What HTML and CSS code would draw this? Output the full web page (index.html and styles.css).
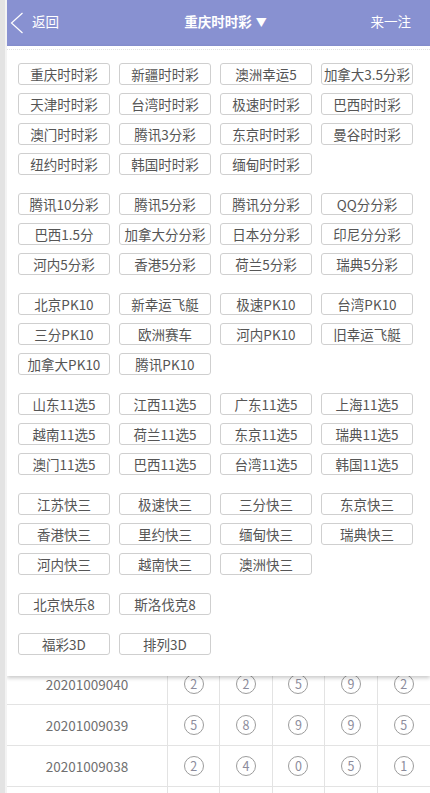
FILE: index.html
```html
<!DOCTYPE html>
<html lang="zh-CN">
<head>
<meta charset="utf-8">
<title>重庆时时彩</title>
<link rel="stylesheet" href="styles.css">
</head>
<body>
<div class="app">
  <header class="topbar">
    <a class="back">
      <svg class="chev" width="14" height="22" viewBox="0 0 14 22"><polyline points="12.5,1 1.5,11 12.5,21" fill="none" stroke="#fff" stroke-width="1.2"/></svg>
      <span>返回</span>
    </a>
    <div class="title">重庆时时彩 <span class="tri">▼</span></div>
    <div class="right">来一注</div>
  </header>

  <div class="list">
    <div class="row">
      <div class="issue">20201009040</div>
      <div class="cell"><span class="ball">2</span></div>
      <div class="cell"><span class="ball">2</span></div>
      <div class="cell"><span class="ball">5</span></div>
      <div class="cell"><span class="ball">9</span></div>
      <div class="cell"><span class="ball">2</span></div>
    </div>
    <div class="row">
      <div class="issue">20201009039</div>
      <div class="cell"><span class="ball">5</span></div>
      <div class="cell"><span class="ball">8</span></div>
      <div class="cell"><span class="ball">9</span></div>
      <div class="cell"><span class="ball">9</span></div>
      <div class="cell"><span class="ball">5</span></div>
    </div>
    <div class="row">
      <div class="issue">20201009038</div>
      <div class="cell"><span class="ball">2</span></div>
      <div class="cell"><span class="ball">4</span></div>
      <div class="cell"><span class="ball">0</span></div>
      <div class="cell"><span class="ball">5</span></div>
      <div class="cell"><span class="ball">1</span></div>
    </div>
    <div class="row">
      <div class="issue"></div>
      <div class="cell"></div>
      <div class="cell"></div>
      <div class="cell"></div>
      <div class="cell"></div>
      <div class="cell"></div>
    </div>
  </div>

  <div class="panel">
    <div class="dots"></div>
    <div class="groups">
      <div class="grp">
        <div class="btn">重庆时时彩</div><div class="btn">新疆时时彩</div><div class="btn">澳洲幸运5</div><div class="btn">加拿大3.5分彩</div>
        <div class="btn">天津时时彩</div><div class="btn">台湾时时彩</div><div class="btn">极速时时彩</div><div class="btn">巴西时时彩</div>
        <div class="btn">澳门时时彩</div><div class="btn">腾讯3分彩</div><div class="btn">东京时时彩</div><div class="btn">曼谷时时彩</div>
        <div class="btn">纽约时时彩</div><div class="btn">韩国时时彩</div><div class="btn">缅甸时时彩</div>
      </div>
      <div class="grp">
        <div class="btn">腾讯10分彩</div><div class="btn">腾讯5分彩</div><div class="btn">腾讯分分彩</div><div class="btn">QQ分分彩</div>
        <div class="btn">巴西1.5分</div><div class="btn">加拿大分分彩</div><div class="btn">日本分分彩</div><div class="btn">印尼分分彩</div>
        <div class="btn">河内5分彩</div><div class="btn">香港5分彩</div><div class="btn">荷兰5分彩</div><div class="btn">瑞典5分彩</div>
      </div>
      <div class="grp">
        <div class="btn">北京PK10</div><div class="btn">新幸运飞艇</div><div class="btn">极速PK10</div><div class="btn">台湾PK10</div>
        <div class="btn">三分PK10</div><div class="btn">欧洲赛车</div><div class="btn">河内PK10</div><div class="btn">旧幸运飞艇</div>
        <div class="btn">加拿大PK10</div><div class="btn">腾讯PK10</div>
      </div>
      <div class="grp">
        <div class="btn">山东11选5</div><div class="btn">江西11选5</div><div class="btn">广东11选5</div><div class="btn">上海11选5</div>
        <div class="btn">越南11选5</div><div class="btn">荷兰11选5</div><div class="btn">东京11选5</div><div class="btn">瑞典11选5</div>
        <div class="btn">澳门11选5</div><div class="btn">巴西11选5</div><div class="btn">台湾11选5</div><div class="btn">韩国11选5</div>
      </div>
      <div class="grp">
        <div class="btn">江苏快三</div><div class="btn">极速快三</div><div class="btn">三分快三</div><div class="btn">东京快三</div>
        <div class="btn">香港快三</div><div class="btn">里约快三</div><div class="btn">缅甸快三</div><div class="btn">瑞典快三</div>
        <div class="btn">河内快三</div><div class="btn">越南快三</div><div class="btn">澳洲快三</div>
      </div>
      <div class="grp">
        <div class="btn">北京快乐8</div><div class="btn">斯洛伐克8</div>
      </div>
      <div class="grp">
        <div class="btn">福彩3D</div><div class="btn">排列3D</div>
      </div>
    </div>
  </div>
</div>
</body>
</html>
```

FILE: styles.css
```css
html, body {
  margin: 0;
  padding: 0;
}
body {
  width: 430px;
  height: 793px;
  overflow: hidden;
  padding-left: 7px;
  box-sizing: border-box;
  background: linear-gradient(to right, #e3e3e3 0, #e3e3e3 5px, #f3f3f3 5px, #f3f3f3 7px);
  font-family: "Noto Sans CJK SC", "Noto Sans", sans-serif;
}
.app {
  position: relative;
  background: #fff;
  height: 793px;
  overflow: hidden;
}
.topbar {
  height: 46px;
  background: #8891d1;
  color: #fff;
  display: grid;
  grid-template-columns: 1fr auto 1fr;
  align-items: center;
  padding: 0 19px 0 3px;
  font-size: 13.5px;
  line-height: 20px;
}
.back {
  display: flex;
  align-items: center;
  gap: 8px;
  padding-bottom: 4px;
}
.chev {
  display: block;
  margin-top: 3px;
}
.title {
  font-weight: bold;
  padding-left: 30px;
  padding-bottom: 4px;
  white-space: nowrap;
}
.tri {
  font-size: 11px;
  font-weight: normal;
  margin-left: 1px;
}
.right {
  justify-self: end;
  padding-bottom: 4px;
}

.list {
  margin-top: 618px;
}
.row {
  display: grid;
  grid-template-columns: 161px repeat(5, 1fr);
  height: 41px;
  box-sizing: border-box;
  border-bottom: 1px solid #e3e3e3;
}
.issue {
  display: flex;
  align-items: center;
  justify-content: center;
  color: #707070;
  font-size: 13.5px;
  border-right: 1px solid #e3e3e3;
}
.cell {
  display: flex;
  align-items: center;
  justify-content: center;
  border-right: 1px solid #e3e3e3;
}
.cell:last-child {
  border-right: none;
}
.ball {
  width: 20px;
  height: 20px;
  box-sizing: border-box;
  border: 1px solid #9c9c9c;
  border-radius: 50%;
  display: flex;
  align-items: center;
  justify-content: center;
  font-size: 12.5px;
  line-height: 1;
  color: #8c8c9c;
}

.panel {
  position: absolute;
  top: 46px;
  left: 0;
  right: 0;
  background: #fff;
  box-shadow: 0 2px 4px rgba(0, 0, 0, 0.22);
  padding-top: 3px;
}
.dots {
  border-top: 1px dotted #e2e2e2;
}
.groups {
  padding: 13px 11px 21px;
  display: flex;
  flex-direction: column;
  gap: 18px;
}
.grp {
  display: grid;
  grid-template-columns: repeat(4, 92px);
  column-gap: 9px;
  row-gap: 8px;
}
.btn {
  height: 22px;
  box-sizing: border-box;
  border: 1px solid #cfcfcf;
  border-radius: 3px;
  color: #555;
  font-size: 13.5px;
  line-height: 20px;
  text-align: center;
  white-space: nowrap;
  overflow: hidden;
}
```
